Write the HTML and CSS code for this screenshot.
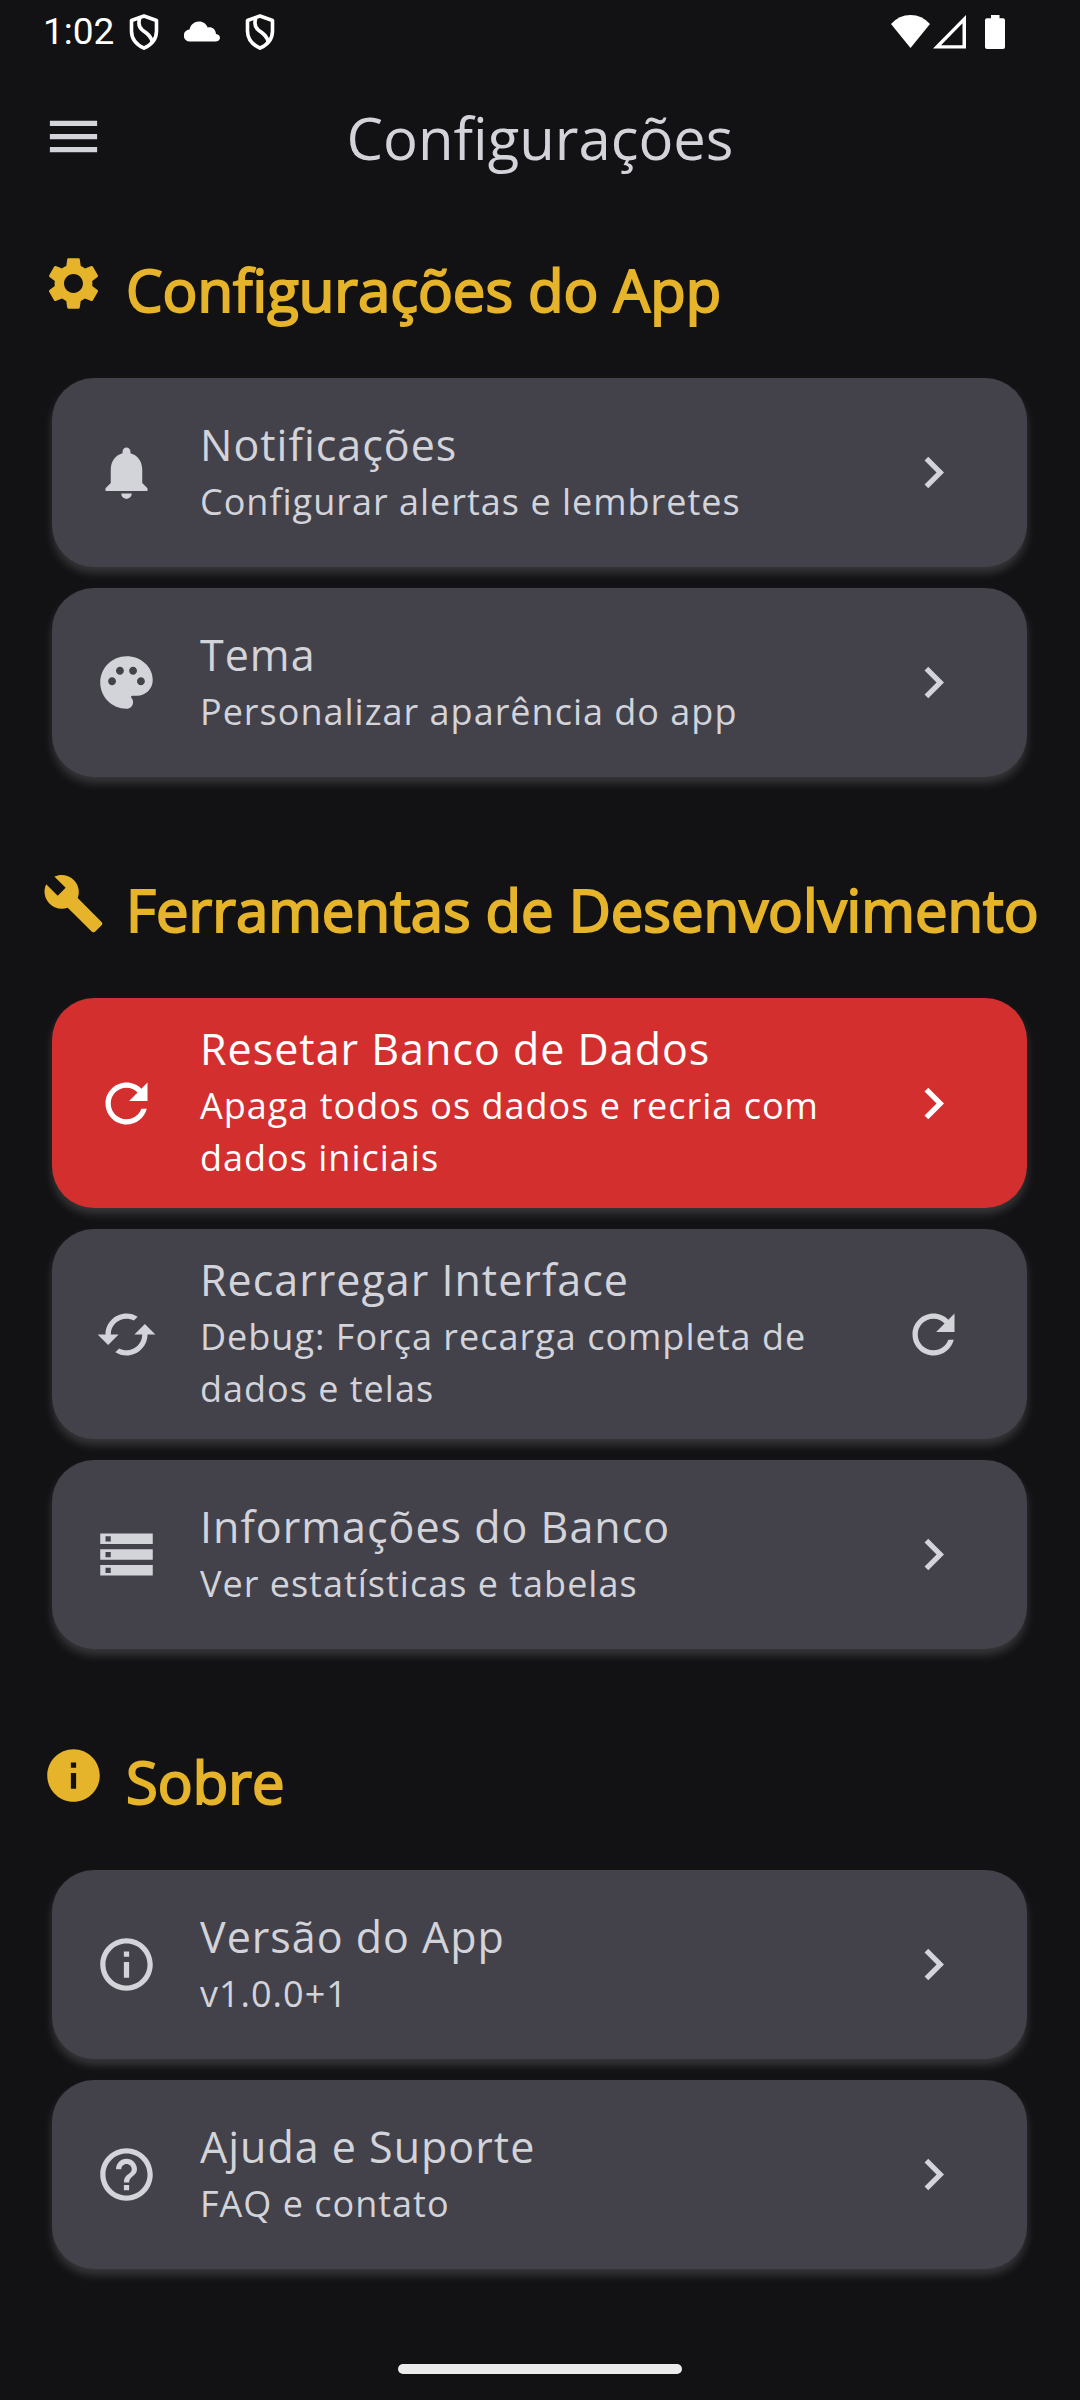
FILE: index.html
```html
<!DOCTYPE html>
<html lang="pt-BR">
<head>
<meta charset="utf-8">
<meta name="viewport" content="width=device-width, initial-scale=1">
<title>Configurações</title>
<link rel="stylesheet" href="styles.css">
</head>
<body>
<svg class="sprite" aria-hidden="true">
  <symbol id="menu" viewBox="0 0 24 24"><path d="M3 18h18v-2H3v2zm0-5h18v-2H3v2zm0-7v2h18V6H3z"/></symbol>
  <symbol id="settings" viewBox="0 0 24 24"><path d="M19.14 12.94c.04-.3.06-.61.06-.94 0-.32-.02-.64-.07-.94l2.03-1.58c.18-.14.23-.41.12-.61l-1.92-3.32c-.12-.22-.37-.29-.59-.22l-2.39.96c-.5-.38-1.03-.7-1.62-.94l-.36-2.54c-.04-.24-.24-.41-.48-.41h-3.84c-.24 0-.43.17-.47.41l-.36 2.54c-.59.24-1.13.57-1.62.94l-2.39-.96c-.22-.08-.47 0-.59.22L2.74 8.87c-.12.21-.08.47.12.61l2.03 1.58c-.05.3-.09.63-.09.94s.02.64.07.94l-2.03 1.58c-.18.14-.23.41-.12.61l1.92 3.32c.12.22.37.29.59.22l2.39-.96c.5.38 1.03.7 1.62.94l.36 2.54c.05.24.24.41.48.41h3.84c.24 0 .44-.17.47-.41l.36-2.54c.59-.24 1.13-.56 1.62-.94l2.39.96c.22.08.47 0 .59-.22l1.92-3.32c.12-.22.07-.47-.12-.61l-2.01-1.58zM12 15.6c-1.98 0-3.6-1.62-3.6-3.6s1.62-3.6 3.6-3.6 3.6 1.62 3.6 3.6-1.62 3.6-3.6 3.6z"/></symbol>
  <symbol id="build" viewBox="0 0 24 24"><path d="M22.7 19l-9.1-9.1c.9-2.3.4-5-1.5-6.9-2-2-5-2.4-7.4-1.3L9 6 6 9 1.6 4.7C.4 7.1.9 10.1 2.9 12.1c1.9 1.9 4.6 2.4 6.9 1.5l9.1 9.1c.4.4 1 .4 1.4 0l2.3-2.3c.5-.4.5-1.1.1-1.4z"/></symbol>
  <symbol id="info" viewBox="0 0 24 24"><path d="M12 2C6.48 2 2 6.48 2 12s4.48 10 10 10 10-4.48 10-10S17.52 2 12 2zm1 15h-2v-6h2v6zm0-8h-2V7h2v2z"/></symbol>
  <symbol id="bell" viewBox="0 0 24 24"><path d="M12 22c1.1 0 2-.9 2-2h-4c0 1.1.89 2 2 2zm6-6v-5c0-3.07-1.64-5.64-4.5-6.32V4c0-.83-.67-1.5-1.5-1.5s-1.5.67-1.5 1.5v.68C7.63 5.36 6 7.92 6 11v5l-2 2v1h16v-1l-2-2z"/></symbol>
  <symbol id="palette" viewBox="0 0 24 24"><path d="M12 2C6.49 2 2 6.49 2 12s4.49 10 10 10c1.38 0 2.5-1.12 2.5-2.5 0-.61-.23-1.2-.64-1.67-.08-.1-.13-.21-.13-.33 0-.28.22-.5.5-.5H16c3.31 0 6-2.69 6-6 0-4.96-4.49-9-10-9zm5.5 11c-.83 0-1.5-.67-1.5-1.5s.67-1.5 1.5-1.5 1.5.67 1.5 1.5-.67 1.5-1.5 1.5zm-3-4c-.83 0-1.5-.67-1.5-1.5S13.67 6 14.5 6s1.5.67 1.5 1.5S15.33 9 14.5 9zM5 11.5c0-.83.67-1.5 1.5-1.5s1.5.67 1.5 1.5S7.33 13 6.5 13 5 12.33 5 11.5zm6-4c0 .83-.67 1.5-1.5 1.5S8 8.33 8 7.5 8.67 6 9.5 6s1.5.67 1.5 1.5z"/></symbol>
  <symbol id="refresh" viewBox="0 0 24 24"><path d="M17.65 6.35C16.2 4.9 14.21 4 12 4c-4.42 0-7.99 3.58-7.99 8s3.57 8 7.99 8c3.73 0 6.84-2.55 7.73-6h-2.08c-.82 2.33-3.04 4-5.65 4-3.31 0-6-2.69-6-6s2.69-6 6-6c1.66 0 3.14.69 4.22 1.78L13 11h7V4l-2.35 2.35z"/></symbol>
  <symbol id="cached" viewBox="0 0 24 24"><path d="M19 8l-4 4h3c0 3.31-2.69 6-6 6-1.01 0-1.97-.25-2.8-.7l-1.46 1.46C8.97 19.54 10.43 20 12 20c4.42 0 8-3.58 8-8h3l-4-4zM6 12c0-3.31 2.69-6 6-6 1.01 0 1.97.25 2.8.7l1.46-1.46C15.03 4.46 13.57 4 12 4c-4.42 0-8 3.58-8 8H1l4 4 4-4H6z"/></symbol>
  <symbol id="storage" viewBox="0 0 24 24"><path d="M2 20h20v-4H2v4zm2-3h2v2H4v-2zM2 4v4h20V4H2zm4 3H4V5h2v2zm-4 7h20v-4H2v4zm2-3h2v2H4v-2z"/></symbol>
  <symbol id="info-outline" viewBox="0 0 24 24"><path d="M11 7h2v2h-2zm0 4h2v6h-2zm1-9C6.48 2 2 6.48 2 12s4.48 10 10 10 10-4.48 10-10S17.52 2 12 2zm0 18c-4.41 0-8-3.59-8-8s3.59-8 8-8 8 3.59 8 8-3.59 8-8 8z"/></symbol>
  <symbol id="help-outline" viewBox="0 0 24 24"><path d="M11 18h2v-2h-2v2zm1-16C6.48 2 2 6.48 2 12s4.48 10 10 10 10-4.48 10-10S17.52 2 12 2zm0 18c-4.41 0-8-3.59-8-8s3.59-8 8-8 8 3.59 8 8-3.59 8-8 8zm0-14c-2.21 0-4 1.79-4 4h2c0-1.1.9-2 2-2s2 .9 2 2c0 2-3 1.75-3 5h2c0-2.25 3-2.5 3-5 0-2.21-1.79-4-4-4z"/></symbol>
  <symbol id="chevron" viewBox="0 0 24 24"><path d="M10 6L8.59 7.41 13.17 12l-4.58 4.59L10 18l6-6z"/></symbol>
  <symbol id="shield" viewBox="0 0 30 36"><path d="M15 2 27.5 6.500V17c0 7.500-4.500 13.500-12.500 17.200C7 30.500 2.500 24.500 2.500 17V6.500zM11 3.500C9 9 9.500 13 13.500 16.200c4.500 3.300 8.500 5.500 9.500 11.300" fill="none" stroke="currentColor" stroke-width="3.600" stroke-linejoin="round"/></symbol>
</svg>

<header class="status">
  <span class="time">1:02</span>
  <div class="status-left">
    <svg width="30" height="36"><use href="#shield"/></svg>
    <svg width="36" height="21" viewBox="0 0 36 21"><path d="M6 20.500a6 6 0 0 1-.5-12C6.500 3.500 10.500.5 15 .5c4 0 7.200 2.300 8.700 6 4.300-1 8 1.900 8.300 6.500 5.300.5 5.300 7 0 7.500z"/></svg>
    <svg width="30" height="36"><use href="#shield"/></svg>
  </div>
  <div class="status-right">
    <svg width="39" height="34" viewBox="0 0 39 34"><path d="M0 9Q8 0 19.500 0T39 9L19.500 33z"/></svg>
    <svg width="33" height="34" viewBox="0 0 33 34"><path fill-rule="evenodd" d="M0 33.500 33 0v33.500zM8 30.200h21.500V8.300z"/></svg>
    <svg width="36" height="34" viewBox="0 0 36 34"><path d="M22 0h8.500v3.300H34a2 2 0 0 1 2 2V32a2 2 0 0 1-2 2H18a2 2 0 0 1-2-2V5.300a2 2 0 0 1 2-2h4z"/></svg>
  </div>
</header>

<div class="appbar">
  <button class="menu" type="button" aria-label="Menu"><svg class="icon"><use href="#menu"/></svg></button>
  <h1 class="title">Configurações</h1>
</div>

<main class="content">
  <section class="section">
    <h2 class="heading"><svg class="icon"><use href="#settings"/></svg><span>Configurações do App</span></h2>
    <div class="cards">
      <button class="card" type="button">
        <svg class="icon"><use href="#bell"/></svg>
        <span class="text"><span class="name">Notificações</span><span class="desc">Configurar alertas e lembretes</span></span>
        <svg class="icon"><use href="#chevron"/></svg>
      </button>
      <button class="card" type="button">
        <svg class="icon"><use href="#palette"/></svg>
        <span class="text"><span class="name">Tema</span><span class="desc">Personalizar aparência do app</span></span>
        <svg class="icon"><use href="#chevron"/></svg>
      </button>
    </div>
  </section>

  <section class="section">
    <h2 class="heading"><svg class="icon"><use href="#build"/></svg><span>Ferramentas de Desenvolvimento</span></h2>
    <div class="cards">
      <button class="card card-danger" type="button">
        <svg class="icon"><use href="#refresh"/></svg>
        <span class="text"><span class="name">Resetar Banco de Dados</span><span class="desc">Apaga todos os dados e recria com dados iniciais</span></span>
        <svg class="icon"><use href="#chevron"/></svg>
      </button>
      <button class="card" type="button">
        <svg class="icon"><use href="#cached"/></svg>
        <span class="text"><span class="name">Recarregar Interface</span><span class="desc">Debug: Força recarga completa de dados e telas</span></span>
        <svg class="icon"><use href="#refresh"/></svg>
      </button>
      <button class="card" type="button">
        <svg class="icon"><use href="#storage"/></svg>
        <span class="text"><span class="name">Informações do Banco</span><span class="desc">Ver estatísticas e tabelas</span></span>
        <svg class="icon"><use href="#chevron"/></svg>
      </button>
    </div>
  </section>

  <section class="section">
    <h2 class="heading"><svg class="icon"><use href="#info"/></svg><span>Sobre</span></h2>
    <div class="cards">
      <button class="card" type="button">
        <svg class="icon"><use href="#info-outline"/></svg>
        <span class="text"><span class="name">Versão do App</span><span class="desc">v1.0.0+1</span></span>
        <svg class="icon"><use href="#chevron"/></svg>
      </button>
      <button class="card" type="button">
        <svg class="icon"><use href="#help-outline"/></svg>
        <span class="text"><span class="name">Ajuda e Suporte</span><span class="desc">FAQ e contato</span></span>
        <svg class="icon"><use href="#chevron"/></svg>
      </button>
    </div>
  </section>
</main>

<footer class="gesture"><div class="pill"></div></footer>
</body>
</html>
```
FILE: styles.css
```css
* { box-sizing: border-box; }

body {
  margin: 0;
  min-height: 100vh;
  display: flex;
  flex-direction: column;
  background: #121214;
  color: #d3d3da;
  font-family: "Open Sans", "Noto Sans", sans-serif;
}

svg { display: block; flex: none; fill: currentColor; }
.sprite { display: none; }
.icon { width: 63px; height: 63px; }

button {
  margin: 0;
  padding: 0;
  border: 0;
  background: none;
  color: inherit;
  font: inherit;
  cursor: pointer;
}

/* Status bar */
.status {
  display: flex;
  align-items: center;
  height: 63px;
  padding: 0 75px 0 43px;
  color: #fff;
}
.time {
  margin-right: 15px;
  font-family: Roboto, sans-serif;
  font-size: 37px;
  line-height: 44px;
}
.status-left { display: flex; align-items: center; gap: 25px; }
.status-right { display: flex; align-items: center; gap: 3px; margin-left: auto; }

/* App bar */
.appbar {
  display: grid;
  grid-template-columns: 63px 1fr 63px;
  align-items: center;
  height: 147px;
  padding: 0 42px;
}
.title {
  margin: 0;
  padding-top: 2px;
  font-size: 58px;
  font-weight: 400;
  line-height: 76px;
  text-align: center;
}

/* Sections */
.content { flex: 1; }
.section { padding: 42px 42px 53px; }
.heading {
  display: flex;
  align-items: flex-start;
  gap: 21px;
  margin: 0 0 50px;
  color: #e6b42a;
  font-size: 58px;
  font-weight: 400;
  line-height: 76px;
  white-space: nowrap;
}
.heading span { -webkit-text-stroke: 2px currentColor; }

/* Cards */
.cards {
  display: flex;
  flex-direction: column;
  gap: 21px;
  padding: 0 11px 0 10px;
}
.card {
  display: flex;
  align-items: center;
  gap: 42px;
  width: 100%;
  min-height: 189px;
  padding: 20px 62px 20px 43px;
  border-radius: 42px;
  background: #43424b;
  box-shadow: 0 6px 10px rgba(255, 255, 255, .16);
  text-align: left;
}
.card-danger { background: #d32f2f; color: #fff; }
.text { flex: 1; min-width: 0; padding-bottom: 4px; }
.name, .desc { display: block; }
.name { font-size: 43px; line-height: 62px; letter-spacing: 1px; }
.desc { font-size: 36px; line-height: 52px; letter-spacing: 1px; }

/* Gesture bar */
.gesture { display: flex; justify-content: center; padding-bottom: 26px; }
.pill { width: 284px; height: 10px; border-radius: 5px; background: #ebebeb; }
```
